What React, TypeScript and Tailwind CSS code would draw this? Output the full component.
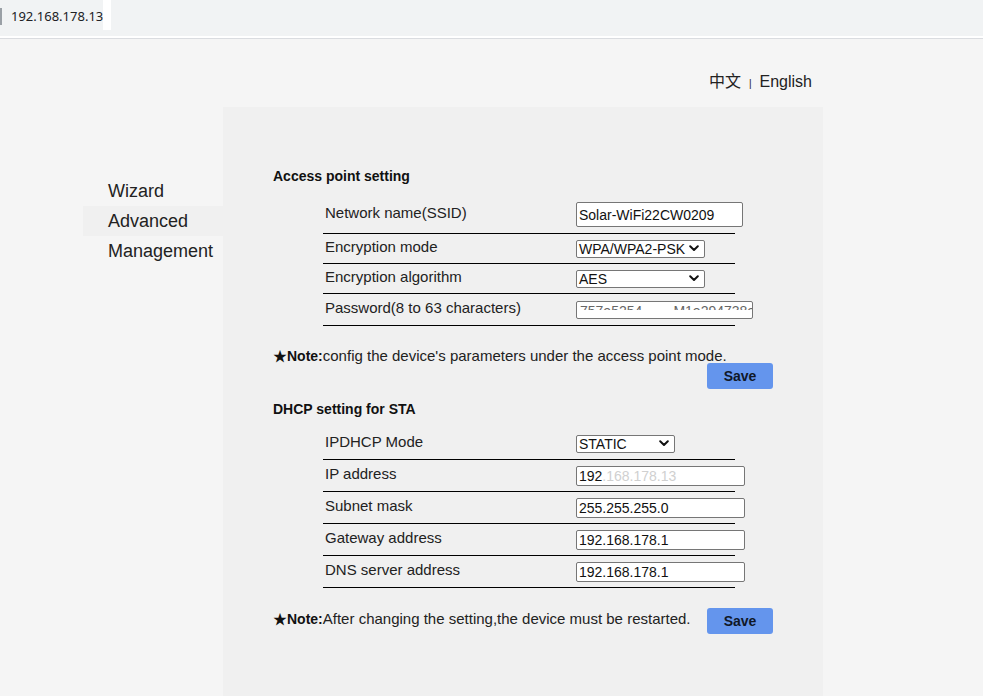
import React from "react";

const F = { fontFamily: '"Liberation Sans", Arial, "Noto Sans CJK SC", sans-serif' };

function Chevron() {
  return (
    <svg width="10" height="7" viewBox="0 0 10 7" className="shrink-0">
      <path d="M1.2 1.3 L5 5 L8.8 1.3" fill="none" stroke="#111" strokeWidth="2" strokeLinecap="round" strokeLinejoin="round" />
    </svg>
  );
}

function Select({ value, w }: { value: string; w: string }) {
  return (
    <div className={`${w} h-[18px] flex items-center justify-between bg-white border border-[#767676] rounded-[2px] pl-[2px] pr-[5px] text-[14px] text-[#111] leading-none`}>
      <span>{value}</span>
      <Chevron />
    </div>
  );
}

function Input({ children, w, h = "h-[25px]" }: { children: React.ReactNode; w: string; h?: string }) {
  return (
    <div className={`${w} ${h} flex items-center bg-white border border-[#767676] rounded-[2px] pl-[2px] text-[14px] text-[#111] leading-none overflow-hidden whitespace-nowrap`}>
      {children}
    </div>
  );
}

function Row({ label, h, children }: { label: string; h: string; children: React.ReactNode }) {
  return (
    <div className={`${h} w-[412px] flex items-center border-b border-black`}>
      <div className="w-[253px] pl-[2px] pb-[3px] text-[15px] text-[#222]">{label}</div>
      <div className="w-0 overflow-visible">{children}</div>
    </div>
  );
}

function SaveBtn() {
  return (
    <div className="w-[66px] h-[26px] rounded-[3px] bg-[#6495ed] flex items-center justify-center text-[14px] font-bold text-[#101828]">
      Save
    </div>
  );
}

function Note({ text }: { text: string }) {
  return (
    <div className="flex items-baseline whitespace-nowrap">
      <span className="text-[14px] font-bold text-[#111]">★Note:</span>
      <span className="text-[15px] text-[#222]">{text}</span>
    </div>
  );
}

export default function App() {
  return (
    <div className="min-h-[696px] bg-[#f5f5f5] overflow-hidden" style={F}>
      <div className="h-[36px] bg-[#f1f3f4] flex items-start">
        <div className="w-[2px] h-[17px] mt-[8px] bg-[#9aa0a6]" />
        <div className="h-[30px] flex items-center pl-[9px]" style={{ fontFamily: '"Noto Sans", "Open Sans", sans-serif' }}>
          <span className="text-[13px] text-[#202124] pt-[3px]">192.168.178.13</span>
          <div className="w-[8px] h-[30px] bg-white" />
        </div>
      </div>
      <div className="h-[2px] bg-white" />
      <div className="h-[1px] bg-[#dadce0]" />

      <div className="ml-[83px] w-[740px]">
        <div className="mt-[34px] h-[18px] flex items-center justify-end pr-[11px] text-[16px] text-[#222]">
          <span>中文</span>
          <span className="text-[10px] mx-[8px] pt-[3px]">|</span>
          <span>English</span>
        </div>

        <div className="mt-[16px] flex">
          <div className="w-[140px] pt-[69px] text-[18px] text-[#222]">
            <div className="h-[30px] leading-[30px] pl-[25px]">Wizard</div>
            <div className="h-[30px] leading-[30px] pl-[25px] bg-[#f0f0f0]">Advanced</div>
            <div className="h-[30px] leading-[30px] pl-[25px]">Management</div>
          </div>

          <div className="w-[600px] min-h-[589px] bg-[#f0f0f0] pl-[50px] pr-[50px] pt-[61px]">
            <div className="h-[16px] leading-[16px] text-[14px] font-bold text-[#111]">Access point setting</div>
            <div className="ml-[50px] mt-[12px]">
              <Row label="Network name(SSID)" h="h-[38px]">
                <Input w="w-[167px]">Solar-WiFi22CW0209</Input>
              </Row>
              <Row label="Encryption mode" h="h-[30px]">
                <Select value="WPA/WPA2-PSK" w="w-[129px]" />
              </Row>
              <Row label="Encryption algorithm" h="h-[30px]">
                <Select value="AES" w="w-[129px]" />
              </Row>
              <Row label="Password(8 to 63 characters)" h="h-[32px]">
                <div className="w-[177px] h-[18px] bg-white border border-[#767676] rounded-[2px] pl-[3px] overflow-hidden">
                  <div className="h-[6px] mt-[2px] overflow-hidden text-[14px] leading-[14px] text-[#666] whitespace-nowrap">
                    757e5254&nbsp;&nbsp;&nbsp;&nbsp;&nbsp;&nbsp;&nbsp;&nbsp;M1e294738ee3
                  </div>
                </div>
              </Row>
            </div>

            <div className="mt-[20px] h-[17px] leading-[17px] pt-[1px]">
              <Note text="config the device's parameters under the access point mode." />
            </div>
            <div className="flex justify-end">
              <SaveBtn />
            </div>

            <div className="mt-[12px] h-[16px] leading-[16px] text-[14px] font-bold text-[#111]">DHCP setting for STA</div>
            <div className="ml-[50px] mt-[11px]">
              <Row label="IPDHCP Mode" h="h-[32px]">
                <Select value="STATIC" w="w-[99px]" />
              </Row>
              <Row label="IP address" h="h-[32px]">
                <Input w="w-[169px]" h="h-[20px]">
                  <span>192</span>
                  <span className="text-[#d0d0d0]">.168.178.13</span>
                </Input>
              </Row>
              <Row label="Subnet mask" h="h-[32px]">
                <Input w="w-[169px]" h="h-[20px]">255.255.255.0</Input>
              </Row>
              <Row label="Gateway address" h="h-[32px]">
                <Input w="w-[169px]" h="h-[20px]">192.168.178.1</Input>
              </Row>
              <Row label="DNS server address" h="h-[32px]">
                <Input w="w-[169px]" h="h-[20px]">192.168.178.1</Input>
              </Row>
            </div>

            <div className="mt-[20px] flex items-center justify-between">
              <div className="pb-[3px]">
                <Note text="After changing the setting,the device must be restarted." />
              </div>
              <SaveBtn />
            </div>
          </div>
        </div>
      </div>
    </div>
  );
}
